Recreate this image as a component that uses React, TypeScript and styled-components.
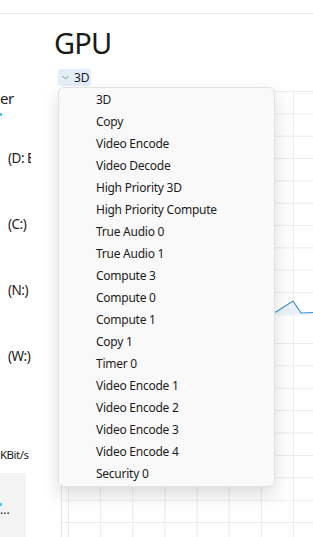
import React from 'react';
import styled, { createGlobalStyle } from 'styled-components';

const GlobalStyle = createGlobalStyle`
  html, body {
    margin: 0;
    padding: 0;
    background: #ffffff;
    overflow: hidden;
  }
  body {
    font-family: "Noto Sans", "Liberation Sans", sans-serif;
    color: #1a1a1a;
  }
`;

const Page = styled.div`
  width: 313px;
  height: 537px;
  display: flex;
  flex-direction: column;
  overflow: hidden;
`;

const TopStrip = styled.div`
  height: 13px;
  border-bottom: 1px solid #e8e8e8;
  flex-shrink: 0;
`;

const Body = styled.div`
  flex: 1;
  display: flex;
  min-height: 0;
`;

const Sidebar = styled.div`
  width: 31px;
  flex-shrink: 0;
  overflow: hidden;
  display: flex;
  flex-direction: column;
  padding-top: 74px;
`;

const SideLabel = styled.div<{ $gap: number; $size?: number; $indent?: number }>`
  margin-top: ${(p) => p.$gap}px;
  padding-left: ${(p) => p.$indent ?? 0}px;
  font-size: ${(p) => p.$size ?? 13.5}px;
  letter-spacing: -0.5px;
  line-height: 20px;
  white-space: nowrap;
  position: relative;
`;

const CyanTick = styled.span<{ $top: number }>`
  position: absolute;
  left: 0;
  top: ${(p) => p.$top}px;
  width: 2px;
  height: 3px;
  background: #4cc2ff;
`;

const SelectedBox = styled.div`
  margin-top: 8px;
  width: 26px;
  flex: 1;
  background: #f3f3f3;
  padding-top: 29px;
  font-size: 12px;
  line-height: 16px;
  position: relative;
`;

const Main = styled.div`
  flex: 1;
  display: flex;
  flex-direction: column;
  padding-left: 27px;
  min-width: 0;
`;

const Title = styled.h1`
  margin: 10px 0 0 -4px;
  font-size: 29px;
  line-height: 38px;
  font-weight: 400;
  letter-spacing: -0.8px;
  color: #1a1a1a;
`;

const DropWrap = styled.div`
  position: relative;
  margin-top: 7px;
  align-self: flex-start;
`;

const DropButton = styled.div`
  display: flex;
  align-items: center;
  gap: 5px;
  height: 17px;
  width: 33px;
  box-sizing: border-box;
  padding-left: 4px;
  background: #e3eef9;
  border-radius: 3px;
  font-size: 12px;
  color: #1a1a1a;
`;

const Menu = styled.div`
  position: absolute;
  left: 0;
  top: 18px;
  width: 217px;
  height: 400px;
  box-sizing: border-box;
  padding-top: 1px;
  background: #f9f9f9;
  border: 1px solid #e2e2e2;
  border-radius: 6px;
  box-shadow: 0 8px 18px rgba(0, 0, 0, 0.14);
  z-index: 2;
`;

const MenuItem = styled.div`
  height: 22px;
  line-height: 22px;
  padding-left: 37px;
  font-size: 12px;
  letter-spacing: -0.25px;
  color: #1b1b1b;
  white-space: nowrap;
`;

const ChartArea = styled.div`
  margin-top: 5px;
  margin-left: 3px;
  flex: 1;
  display: flex;
  flex-direction: column;
  border-left: 1px solid #e6e6e6;
  background-image: linear-gradient(to right, #ebebeb 1px, transparent 1px);
  background-size: 32.15px 100%;
  background-position: 6px 0;
`;

const GraphTop = styled.div`
  height: 225px;
  flex-shrink: 0;
  background-image: linear-gradient(to bottom, #ebebeb 1px, transparent 1px);
  background-size: 100% 22.35px;
`;

const GraphRest = styled.div`
  flex: 1;
  padding-top: 27px;
  background-origin: content-box;
  background-clip: content-box;
  background-image: linear-gradient(to bottom, #ebebeb 1px, transparent 1px);
  background-size: 100% 22.4px;
`;

const Chevron = () => (
  <svg width="7" height="5" viewBox="0 0 7 5">
    <polyline points="0.5,1 3.5,4 6.5,1" fill="none" stroke="#8a8a8a" strokeWidth="1" />
  </svg>
);

const engines = [
  '3D',
  'Copy',
  'Video Encode',
  'Video Decode',
  'High Priority 3D',
  'High Priority Compute',
  'True Audio 0',
  'True Audio 1',
  'Compute 3',
  'Compute 0',
  'Compute 1',
  'Copy 1',
  'Timer 0',
  'Video Encode 1',
  'Video Encode 2',
  'Video Encode 3',
  'Video Encode 4',
  'Security 0',
];

const usageLine = '0,222 214,221 231,210 239,222 251,221.5';

const App = () => {
  return (
    <Page>
      <GlobalStyle />
      <TopStrip />
      <Body>
        <Sidebar>
          <SideLabel $gap={0} $size={15}>
            er
            <CyanTick $top={25} />
          </SideLabel>
          <SideLabel $gap={40} $indent={8}>(D: E</SideLabel>
          <SideLabel $gap={46} $indent={8}>(C:)</SideLabel>
          <SideLabel $gap={46} $indent={8}>(N:)</SideLabel>
          <SideLabel $gap={46} $indent={8}>(W:)</SideLabel>
          <SideLabel $gap={79} $size={11.5}>
            KBit/s
          </SideLabel>
          <SelectedBox>
            <CyanTick $top={30} />
            ...
          </SelectedBox>
        </Sidebar>
        <Main>
          <Title>GPU</Title>
          <DropWrap>
            <DropButton>
              <Chevron />
              3D
            </DropButton>
            <Menu>
              {engines.map((name) => (
                <MenuItem key={name}>{name}</MenuItem>
              ))}
            </Menu>
          </DropWrap>
          <ChartArea>
            <GraphTop>
              <svg width="100%" height="225" viewBox="0 0 251 225" preserveAspectRatio="none">
                <polygon points={`${usageLine} 251,223 0,223`} fill="#e9f2fa" />
                <polyline points={usageLine} fill="none" stroke="#3f8fcc" strokeWidth="1.2" />
              </svg>
            </GraphTop>
            <GraphRest />
          </ChartArea>
        </Main>
      </Body>
    </Page>
  );
};

export default App;
